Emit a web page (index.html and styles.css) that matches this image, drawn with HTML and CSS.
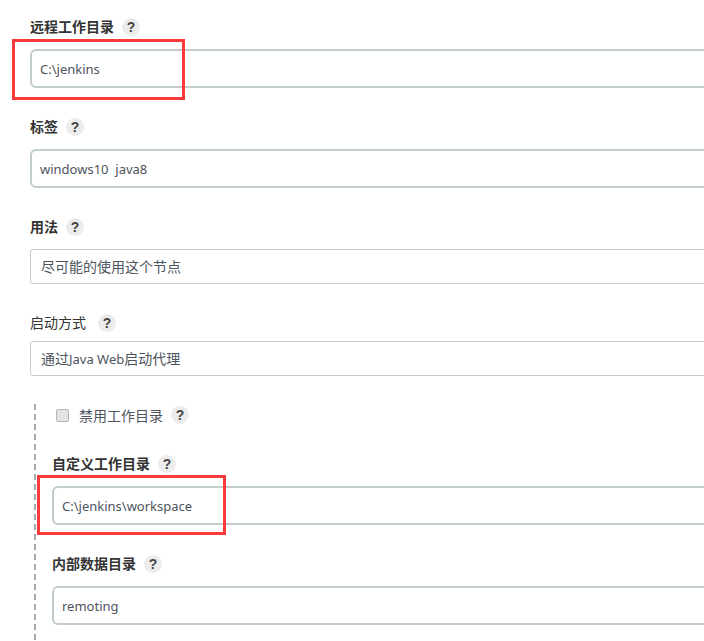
FILE: index.html
```html
<!DOCTYPE html>
<html lang="zh-CN">
<head>
  <meta charset="UTF-8" />
  <meta name="viewport" content="width=device-width, initial-scale=1.0"/>
  <title>节点配置</title>
  <link rel="stylesheet" href="styles.css">
</head>
<body>
  <div class="form">
    <div class="field first">
      <div class="field-label"><b>远程工作目录</b><span class="help">?</span></div>
      <input class="text-input" type="text" value="C:\jenkins" />
    </div>

    <div class="field">
      <div class="field-label"><b>标签</b><span class="help">?</span></div>
      <input class="text-input" type="text" value="windows10  java8" />
    </div>

    <div class="field">
      <div class="field-label"><b>用法</b><span class="help">?</span></div>
      <div class="select-box">尽可能的使用这个节点</div>
    </div>

    <div class="field launch">
      <div class="field-label plain"><span>启动方式</span><span class="help wide">?</span></div>
      <div class="select-box">通过<span class="latin">Java Web</span>启动代理</div>
    </div>

    <div class="nested">
      <div class="check-row">
        <span class="check"></span>
        <span class="check-text">禁用工作目录</span>
        <span class="help">?</span>
      </div>

      <div class="field sub-first">
        <div class="field-label"><b>自定义工作目录</b><span class="help">?</span></div>
        <input class="text-input" type="text" value="C:\jenkins\workspace" />
      </div>

      <div class="field">
        <div class="field-label"><b>内部数据目录</b><span class="help">?</span></div>
        <input class="text-input" type="text" value="remoting" />
      </div>
    </div>
  </div>

  <div class="mark mark-one"></div>
  <div class="mark mark-two"></div>
</body>
</html>
```

FILE: styles.css
```css
html, body {
  margin: 0;
  height: 641px;
  overflow: hidden;
  background: #fff;
}

body {
  position: relative;
  font-family: "Noto Sans", "Noto Sans CJK SC", sans-serif;
  font-size: 14px;
  color: #333;
}

.form {
  width: 674px;
  padding: 16px 0 0 30px;
  overflow: hidden;
}

.field {
  margin-top: 28px;
}

.field.first {
  margin-top: 0;
}

.field.launch {
  margin-top: 30px;
}

.field-label {
  display: flex;
  align-items: center;
  height: 22px;
  margin-bottom: 11px;
  color: #333;
  line-height: 22px;
}

.field-label b {
  font-weight: 700;
}

.field-label.plain {
  height: 18px;
  margin-bottom: 9px;
}

.help {
  display: inline-block;
  width: 18px;
  height: 18px;
  margin-left: 8px;
  border-radius: 50%;
  background: #ececec;
  color: #444;
  font-family: "Liberation Sans", sans-serif;
  font-size: 14px;
  font-weight: 700;
  line-height: 18px;
  text-align: center;
  flex: none;
}

.help.wide {
  margin-left: 12px;
}

.text-input {
  display: block;
  box-sizing: border-box;
  width: 720px;
  height: 39px;
  padding: 0 8px;
  border: 2px solid #c3cccc;
  border-radius: 6px;
  outline: none;
  background: #fff;
  color: #4d545d;
  font-family: "Noto Sans", sans-serif;
  font-size: 13px;
  white-space: pre;
}

.select-box {
  box-sizing: border-box;
  width: 720px;
  height: 35px;
  padding: 0 10px;
  border: 1px solid #c3cccc;
  border-radius: 3px;
  color: #4d545d;
  line-height: 34px;
}

.latin {
  font-size: 13px;
}

.nested {
  box-sizing: border-box;
  height: 240px;
  margin: 28px 0 0 4px;
  padding: 0 0 0 18px;
  background: repeating-linear-gradient(#aaa 0, #aaa 6px, transparent 6px, transparent 10px) left top / 2px 100% no-repeat;
}

.check-row {
  display: flex;
  align-items: center;
  height: 22px;
  padding: 0 0 0 4px;
  color: #4d545d;
}

.check {
  box-sizing: border-box;
  width: 13px;
  height: 13px;
  margin-right: 10px;
  border: 1px solid #b5b5b5;
  border-radius: 2px;
  background: #e4e4e4;
}

.sub-first {
  margin-top: 27px;
}

.mark {
  position: absolute;
  box-sizing: border-box;
  border: 3px solid #f93a3a;
}

.mark-one {
  left: 12px;
  top: 39px;
  width: 173px;
  height: 61px;
}

.mark-two {
  left: 37px;
  top: 475px;
  width: 189px;
  height: 60px;
}
```
